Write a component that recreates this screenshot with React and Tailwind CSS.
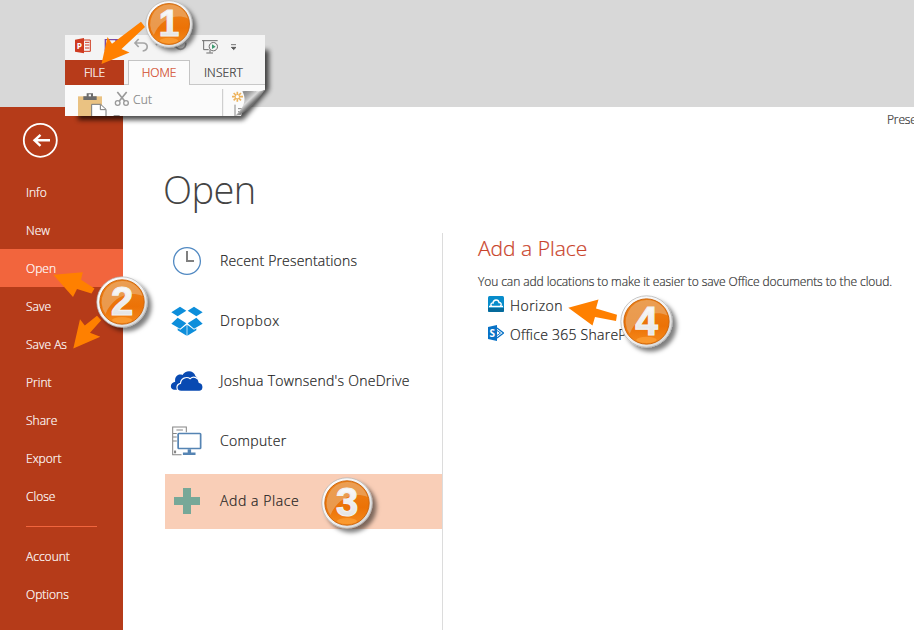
import React from "react";

const light = "font-['Open_Sans','Noto_Sans',sans-serif] font-light";
const regular = "font-['Open_Sans','Noto_Sans',sans-serif] font-[350] [-webkit-text-stroke:0.2px]";

function Badge({ n, className }) {
  const id = "badge" + n;
  return (
    <svg className={"absolute overflow-visible " + className} viewBox="0 0 52 52">
      <defs>
        <linearGradient id={id + "ring"} x1="0" y1="0" x2="1" y2="1">
          <stop offset="0" stopColor="#ffffff" />
          <stop offset=".55" stopColor="#f0f0f0" />
          <stop offset="1" stopColor="#cfcfcf" />
        </linearGradient>
        <linearGradient id={id + "fill"} x1="0" y1="0" x2="0" y2="1">
          <stop offset="0" stopColor="#ed841c" />
          <stop offset=".6" stopColor="#ec7206" />
          <stop offset="1" stopColor="#f58a1c" />
        </linearGradient>
        <linearGradient id={id + "num"} x1="0" y1="0" x2="0" y2="1">
          <stop offset="0" stopColor="#ffffff" />
          <stop offset="1" stopColor="#dedede" />
        </linearGradient>
        <filter id={id + "sh"} x="-30%" y="-30%" width="180%" height="180%">
          <feDropShadow dx="4" dy="4" stdDeviation="2.3" floodColor="#000" floodOpacity=".5" />
        </filter>
      </defs>
      <circle cx="26" cy="26" r="25.2" fill={`url(#${id}ring)`} stroke="#b0b0b0" strokeWidth=".7" filter={`url(#${id}sh)`} />
      <circle cx="26" cy="26" r="22.2" fill={`url(#${id}fill)`} stroke="#c9620a" strokeWidth=".9" />
      <path d="M9.5 38 A21 21 0 0 1 26 5 A21 21 0 0 1 46.5 20 C32 14 16 22 9.5 38Z" fill="#e9a765" opacity=".75" />
      <ellipse cx="26" cy="44" rx="10" ry="3" fill="#ffa640" opacity=".6" />
      <text
        x="26" y="39.3" textAnchor="middle" fontSize="40" fontWeight="700"
        fontFamily="Liberation Sans, sans-serif" fill={`url(#${id}num)`} stroke="#f1f1f1" strokeWidth="1.1"
      >{n}</text>
    </svg>
  );
}

function Arrows() {
  return (
    <svg className="absolute left-0 top-0 w-[914px] h-[630px] pointer-events-none" viewBox="0 0 914 630" fill="#ff8000">
      <path d="M101.5 64 L107.5 37 L112 43.8 L141 21.8 L145 27 L121.5 49 L129.5 52.5Z" />
      <path d="M53.3 274.7 L82.8 272.3 L81 279.8 L94.5 288.5 L91.5 293.5 L77 289 L73 297Z" />
      <path d="M73.3 348.5 L80 319.3 L84.8 325.5 L97 315.8 L101.2 320.3 L90 332.7 L100.3 336.7Z" />
      <path d="M568.3 307.7 L598.5 299.5 L596 308.5 L617 314.7 L616 321 L595 317 L592.5 325.5Z" />
    </svg>
  );
}

function Snippet() {
  return (
    <div className="absolute left-[65px] top-[35px] h-[81px] w-[200px]">
      <svg className="absolute left-0 top-0 h-[81px] w-[200px] overflow-visible" viewBox="65 35 200 81">
        <filter id="pageShadow" x="-20%" y="-30%" width="140%" height="170%">
          <feGaussianBlur stdDeviation="2.4" />
        </filter>
        <path d="M78 50H269V90L243 120H78Z" fill="#000" opacity=".7" filter="url(#pageShadow)" />
        <path d="M65 35H265V90L246 98L241 116H65Z" fill="#fbfbfb" />
      </svg>
      <div className="relative flex h-[25px] items-center bg-[#f4f4f4]">
        <svg className="h-[25px] w-[200px]" viewBox="30 105 600 75">
          <path d="M60 119 L87 114 V160 L60 155Z" fill="#cf3b20" />
          <path d="M87 120H106V154H87 M90 127H103 M90 135H103 M90 144H103" stroke="#cf3b20" strokeWidth="3" fill="none" />
          <text x="65" y="147" fontSize="25" fontWeight="700" fontFamily="Open Sans, sans-serif" fill="#fff">P</text>
          <path d="M151 119H190V156H155L151 152Z" fill="none" stroke="#7b4ba5" strokeWidth="4" />
          <path d="M181 119H190V134H181Z M160 143H181V156H160Z" fill="#7b4ba5" />
          <path d="M251 117L240 129L251 141M241 129H264C281 129 281 151 263 153" stroke="#a5a5a5" strokeWidth="5" fill="none" />
          <path d="M300 131H310L305 137Z" fill="#a5a5a5" />
          <path d="M361 128A16 16 0 1 0 392 128" stroke="#a5a5a5" strokeWidth="5" fill="none" />
          <path d="M441 122H488M446 122V149H461M465 149V158M454 159H474" stroke="#6c6c6c" strokeWidth="3" fill="none" />
          <circle cx="475" cy="140" r="12.5" fill="#f4f4f4" stroke="#6c6c6c" strokeWidth="3" />
          <path d="M471 133L482 140L471 147Z" fill="#3d9970" />
          <path d="M528 134H543M529 142H543L536 149Z" stroke="#555" strokeWidth="2.4" fill="#555" />
        </svg>
      </div>
      <div className={"relative flex h-[25px] bg-[#f4f4f4] text-[12px] leading-[25px] " + regular}>
        <div className="w-[59px] bg-[#b73b1a] text-center text-[12px] tracking-[-0.2px] text-white">FILE</div>
        <div className="w-[4px] border-b border-[#c8c8c8]" />
        <div className="w-[62px] border-x border-t border-[#c4c4c4] bg-[#fbfbfb] text-center tracking-[-0.1px] text-[#d24726]"><span className="relative -top-px">HOME</span></div>
        <div className="flex-1 border-b border-[#c8c8c8] pl-[14px] tracking-[0.1px] text-[#333]">INSERT</div>
      </div>
      <div className="relative h-[31px]">
        <svg className="absolute left-0 top-0 h-[31px] w-[200px]" viewBox="30 255 600 93">
          <path d="M69 289H141V348H69Z" fill="#eac282" />
          <path d="M85 289H95V280H114V289H125V300H85Z" fill="#6b6b6b" />
          <path d="M101 283H108V289H101Z" fill="#fbfbfb" />
          <path d="M110 348V313H137L153 328V348" fill="#fff" stroke="#777" strokeWidth="3" />
          <path d="M136 314V329H152" fill="none" stroke="#777" strokeWidth="3" />
          <path d="M187 276L209 303M215 276L193 303" stroke="#999" strokeWidth="5" fill="none" />
          <circle cx="188" cy="309" r="7" fill="none" stroke="#999" strokeWidth="4" />
          <circle cx="213" cy="309" r="7" fill="none" stroke="#999" strokeWidth="4" />
          <path d="M176 347H194" stroke="#888" strokeWidth="3" />
          <path d="M503 267V348" stroke="#c6c6c6" strokeWidth="3" />
          <path d="M547 275V305M531 290H564M536 279L558 301M558 279L536 301" stroke="#edb35c" strokeWidth="5" />
          <circle cx="547" cy="290" r="5" fill="#fff" />
          <path d="M540 314V348M549 326H564M549 335H564M549 344H560" stroke="#888" strokeWidth="3" />
        </svg>
        <span className={"relative left-[68px] top-[5px] block text-[12px] leading-[20px] tracking-[0.2px] text-[#858585] " + regular}>Cut</span>
      </div>
      <svg className="absolute left-0 top-0 h-[81px] w-[200px]" viewBox="30 105 600 243">
        <defs>
          <linearGradient id="curl" x1="562" y1="276" x2="594" y2="310" gradientUnits="userSpaceOnUse">
            <stop offset="0" stopColor="#858585" />
            <stop offset=".35" stopColor="#a4a4a4" />
            <stop offset=".68" stopColor="#dadada" />
            <stop offset="1" stopColor="#6c6c6c" />
          </linearGradient>
        </defs>
        <path d="M630 269C610 278 590 270 562 274C577 300 565 325 540 348C574 342 606 306 630 269Z" fill="url(#curl)" />
      </svg>
    </div>
  );
}

function NavItem({ children, active }) {
  return (
    <div className={"flex h-[38px] items-center pl-[26px] pt-[2px] text-[12px] text-white " + regular + (active ? " bg-[#f2653d]" : "")}>
      {children}
    </div>
  );
}

function Place({ icon, children, className = "h-[60px]", textClass = "" }) {
  return (
    <div className={"flex items-center pl-[5px] " + className}>
      <div className="flex w-[34px] justify-center">{icon}</div>
      <div className={"-mt-[2px] ml-[16px] whitespace-nowrap text-[14px] text-[#1c1c1c] " + regular + " " + textClass}>{children}</div>
    </div>
  );
}

const clock = (
  <svg className="h-[30px] w-[30px]" viewBox="0 0 30 30" fill="none">
    <circle cx="15" cy="15" r="13.4" stroke="#5189c2" strokeWidth="1.3" />
    <path d="M15 5V15H22" stroke="#808080" strokeWidth="2" />
  </svg>
);
const dropbox = (
  <svg className="h-[30px] w-[32px]" viewBox="34 34 96 90" fill="#0d8edb">
    <path d="M61 36L80 48L54 65L35 53Z M103 36L129 53L110 65L84 48Z M54 69L80 86L61 102L35 87Z M110 69L129 87L103 102L84 86Z" />
    <path d="M81 90L62 105L54 101V107L81 123Z M83 90L103 105L110 101V107L83 123Z" />
  </svg>
);
const onedrive = (
  <svg className="h-[22px] w-[34px]" viewBox="31 222 101 66" fill="#094ab2">
    <path d="M42 281C30 280 29 260 46 257C44 242 54 232 68 237C76 222 102 221 107 241C112 244 113 247 114 250L76 270L54 281Z" />
    <path d="M64 286C48 286 47 266 62 262C63 247 80 240 91 248C101 239 117 245 118 259C133 261 134 285 118 286Z" stroke="#fff" strokeWidth="3.5" />
  </svg>
);
const computer = (
  <svg className="h-[30px] w-[30px]" viewBox="38 34 88 88" fill="none">
    <path d="M80 52V37H40V118H66M51 46H70M41 56H52M41 66H52M41 78H52" stroke="#858585" strokeWidth="3" />
    <path d="M44 106H50V114H44Z" fill="#858585" />
    <rect x="56" y="56" width="66" height="44" rx="2" fill="#fff" stroke="#5584b3" strokeWidth="5" />
    <path d="M84 102H94V112H107V119H70V112H84Z" fill="#5584b3" />
  </svg>
);
const plus = (
  <svg className="-mt-px h-[26px] w-[26px]" viewBox="0 0 26 26" fill="#77a898">
    <path d="M9 0H17V9H26V17H17V26H9V17H0V9H9Z" />
  </svg>
);

export default function App() {
  return (
    <div className="relative flex h-[630px] w-[914px] flex-col overflow-hidden bg-white">
      <div className="h-[107px] shrink-0 bg-[#d8d8d8]" />
      <div className="flex flex-1">
        <nav className="w-[123px] shrink-0 bg-[#b53b19]">
          <div className="h-[66px] pl-[22px] pt-[15px]">
            <svg className="h-[36px] w-[36px]" viewBox="0 0 36 36" fill="none" stroke="#fff">
              <circle cx="18.3" cy="18.3" r="16.5" strokeWidth="1.8" />
              <path d="M28 18.3H12M18.5 12.8L12.5 18.3L18.5 23.8" strokeWidth="2.4" />
            </svg>
          </div>
          <NavItem>Info</NavItem>
          <NavItem>New</NavItem>
          <NavItem active>Open</NavItem>
          <NavItem>Save</NavItem>
          <NavItem>Save As</NavItem>
          <NavItem>Print</NavItem>
          <NavItem>Share</NavItem>
          <NavItem>Export</NavItem>
          <NavItem>Close</NavItem>
          <div className="mb-[10px] ml-[26px] mt-[11px] h-px w-[71px] bg-[#f2653d]" />
          <NavItem>Account</NavItem>
          <NavItem>Options</NavItem>
        </nav>
        <main className="ml-[42px] w-[277px] shrink-0">
          <h1 className={"-ml-[2px] h-[124px] pt-[55px] text-[38px] leading-[54px] tracking-[-0.6px] text-[#444] " + light}>Open</h1>
          <Place icon={clock} textClass="tracking-[0.17px]">Recent Presentations</Place>
          <Place icon={dropbox} textClass="tracking-[0.65px]">Dropbox</Place>
          <Place icon={onedrive} textClass="tracking-[0.27px]">Joshua Townsend's OneDrive</Place>
          <Place icon={computer} textClass="tracking-[0.35px]">Computer</Place>
          <Place icon={plus} className="mt-[3px] h-[55px] bg-[#f9ceb7]" textClass="tracking-[0.57px]">Add a Place</Place>
        </main>
        <div className="mt-[126px] w-px shrink-0 bg-[#dcdcdc]" />
        <section className="w-[471px] shrink-0 overflow-hidden pl-[35px]">
          <div className={"ml-[409px] whitespace-nowrap pt-[3px] text-[12px] leading-[20px] tracking-[-0.15px] text-[#333] " + regular}>Prese</div>
          <h2 className={"mt-[103px] text-[21px] leading-[30px] text-[#c9432a] " + regular}>Add a Place</h2>
          <p className={"mt-[9px] whitespace-nowrap text-[12px] leading-[20px] tracking-[-0.08px] text-[#333] " + regular}>You can add locations to make it easier to save Office documents to the cloud.</p>
          <div className={"-mt-px flex h-[29px] items-center pl-[10px] text-[14px] text-[#1c1c1c] " + regular}>
            <svg className="-mt-[4px] h-[16px] w-[16px]" viewBox="0 0 16 16">
              <rect width="16" height="16" rx="1.5" fill="#078ccb" />
              <path d="M0 12H16V14.5Q16 16 14.5 16H1.5Q0 16 0 14.5Z" fill="#056a9b" />
              <path d="M1 10.5H4M12 10.5H15M4 10.5C1.5 9 3.5 6.5 5 7C5.5 3 10.5 3 11 6.5C13.5 6.5 14 9 12 10.5Z" fill="none" stroke="#fff" strokeWidth="1.4" />
            </svg>
            <span className="ml-[6px] tracking-[0.45px]">Horizon</span>
          </div>
          <div className={"flex h-[29px] items-center pl-[10px] text-[14px] text-[#1c1c1c] " + regular}>
            <svg className="-mt-[4px] h-[16px] w-[16px]" viewBox="0 0 16 16">
              <path d="M9 3L15.5 8L9 13" fill="none" stroke="#0872c6" strokeWidth="1.3" />
              <path d="M9 5.5L12.5 8L9 10.5" fill="none" stroke="#0872c6" strokeWidth="1" />
              <path d="M0 2L9 0V16L0 14Z" fill="#0872c6" />
              <text x="1.6" y="11.5" fontSize="10" fontWeight="700" fontFamily="Open Sans, sans-serif" fill="#fff">S</text>
            </svg>
            <span className="ml-[6px] whitespace-nowrap tracking-[0.25px]">Office 365 ShareP</span>
          </div>
        </section>
      </div>
      <Snippet />
      <Arrows />
      <Badge n={1} className="left-[144.5px] top-0 h-[48px] w-[48px]" />
      <Badge n={2} className="left-[95.5px] top-[275.5px] h-[52px] w-[52px]" />
      <Badge n={3} className="left-[321px] top-[477px] h-[52px] w-[52px]" />
      <Badge n={4} className="left-[620px] top-[295px] h-[53px] w-[53px]" />
    </div>
  );
}
